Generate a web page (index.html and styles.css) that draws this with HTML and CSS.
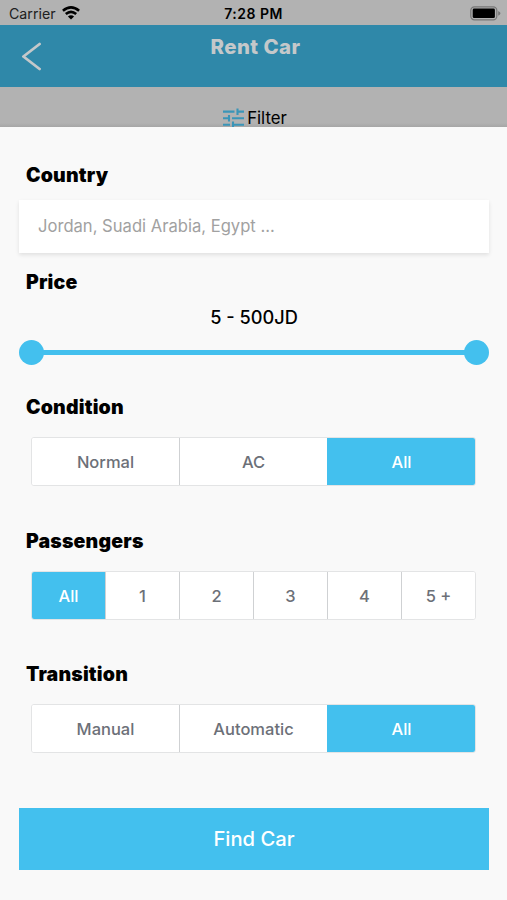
FILE: index.html
```html
<!DOCTYPE html>
<html lang="en">
<head>
<meta charset="utf-8">
<title>Rent Car</title>
<link rel="stylesheet" href="styles.css">
</head>
<body>
<div class="screen">
  <div class="status">
    <div class="carrier"><span>Carrier</span>
      <svg width="18" height="14" viewBox="0 0 18 14" fill="none" stroke="#000" stroke-width="2.6"><path d="M.9 4.8Q9-2 17.1 4.8M3.8 8Q9 3.6 14.2 8"/><path d="M9 13.5L5.9 10.5Q9 8 12.1 10.5Z" fill="#000" stroke="none"/></svg>
    </div>
    <span class="time">7:28 PM</span>
    <svg class="battery" width="31" height="15" viewBox="0 0 31 15"><rect x=".8" y=".8" width="26" height="13" rx="3.6" fill="none" stroke="#777" stroke-width="1.2"/><rect x="2.7" y="2.5" width="22.2" height="9.6" rx="1.4" fill="#000"/><path d="M28.2 4.9Q30.5 6 30.5 7.3T28.2 9.8Z" fill="#777"/></svg>
  </div>
  <header class="header">
    <svg class="back" width="20" height="30" viewBox="0 0 20 30" fill="none" stroke="#c4c8ca" stroke-width="2.8" stroke-linecap="round" stroke-linejoin="round"><path d="M18.6 2L2.4 14.5L18.6 27"/></svg>
    <h1>Rent Car</h1>
    <span></span>
  </header>
  <div class="filter">
    <svg width="21" height="19" viewBox="0 0 21 19" fill="none" stroke="#3a95b8" stroke-width="2.1"><path d="M0 3.6H11.5M14 3.6H21M14.5 .5V7M0 10.2H6M9 10.2H21M6 7V13.5M0 16.8H7M10 16.8H21M10 13.5V19"/></svg>
    <span>Filter</span>
  </div>
  <main class="sheet">
    <h2>Country</h2>
    <input class="country" type="text" placeholder="Jordan, Suadi Arabia, Egypt ...">
    <h2 class="price-title">Price</h2>
    <div class="price">5 - 500JD</div>
    <div class="slider"><i class="thumb"></i><i class="track"></i><i class="thumb"></i></div>
    <h2 class="condition-title">Condition</h2>
    <div class="segments"><button>Normal</button><button>AC</button><button class="on">All</button></div>
    <h2 class="group-title">Passengers</h2>
    <div class="segments"><button class="on">All</button><button>1</button><button>2</button><button>3</button><button>4</button><button>5 +</button></div>
    <h2 class="group-title last">Transition</h2>
    <div class="segments"><button>Manual</button><button>Automatic</button><button class="on">All</button></div>
    <button class="find">Find Car</button>
  </main>
</div>
</body>
</html>
```
FILE: styles.css
```css
* { box-sizing: border-box; }
body { margin: 0; font-family: Inter, "Liberation Sans", sans-serif; color: #000; }
.screen { width: 507px; height: 900px; overflow: hidden; display: flex; flex-direction: column; background: #b2b2b2; }
.status { height: 25px; flex: none; display: grid; grid-template-columns: 1fr auto 1fr; align-items: center; padding: 2px 6px 0 9px; font-size: 14.2px; }
.carrier { display: flex; align-items: center; gap: 6px; color: #202020; }
.carrier svg { margin-top: -2px; }
.time { font-weight: 600; font-size: 14px; letter-spacing: .5px; margin-right: 3px; }
.battery { justify-self: end; }
.header { height: 62px; flex: none; display: grid; grid-template-columns: 1fr auto 1fr; background: #2f88a9; padding: 0 16px 0 20px; }
.header h1 { margin: 10px 0 0; font-size: 20.4px; line-height: 24px; font-weight: 800; letter-spacing: .45px; color: #c4c8ca; }
.back { margin-top: 17px; margin-left: 1px; }
.filter { height: 40px; flex: none; display: flex; justify-content: center; gap: 3px; padding: 22px 0 0 3px; font-size: 16.8px; line-height: 19px; background: linear-gradient(#b2b2b2 36px, #a6a6a6); }
.filter svg { flex: none; margin-top: -1px; }
.sheet { flex: 1; background: #f9f9f9; padding: 36px 18px 0 19px; display: flex; flex-direction: column; }
h2 { margin: 0 0 0 7px; font-size: 19.5px; line-height: 24px; font-weight: 900; letter-spacing: .18px; }
.country { margin-top: 13px; height: 53px; border: 0; padding: 0 19px 2px; background: #fff; box-shadow: 0 2px 4px rgba(0,0,0,.1); font: 400 16.6px Inter, sans-serif; outline: 0; }
.country::placeholder { color: #a1a1a1; opacity: 1; }
.price-title { margin-top: 17px; }
.price { margin-top: 11px; line-height: 25px; height: 24px; text-align: center; font-size: 18.2px; font-weight: 500; }
.slider { margin-top: 10px; height: 26px; display: flex; align-items: center; }
.thumb { width: 25px; height: 25px; border-radius: 50%; background: #43c0ee; }
.track { flex: 1; height: 5px; margin: 0 -2px; background: #43c0ee; }
.condition-title { margin-top: 30px; }
.group-title { margin-top: 43px; }
.group-title.last { margin-top: 42px; }
.segments { height: 49px; margin: 18px 13px 0 12px; display: flex; border: 1px solid #e3e4e5; border-radius: 3px; overflow: hidden; background: #fff; }
.segments button { flex: 1 1 0; min-width: 0; padding: 0; border: 0; border-left: 1px solid #cfd1d3; background: #fff; color: #6c7078; font: 500 16.5px Inter, sans-serif; }
.segments button:first-child { border-left: 0; }
.segments .on { background: #43c0ee; color: #fff; border-left-color: #43c0ee; }
.find { margin-top: 55px; height: 62px; padding: 0 0 2px; border: 0; background: #43c0ee; color: #fff; font: 500 20.2px Inter, sans-serif; }
```
